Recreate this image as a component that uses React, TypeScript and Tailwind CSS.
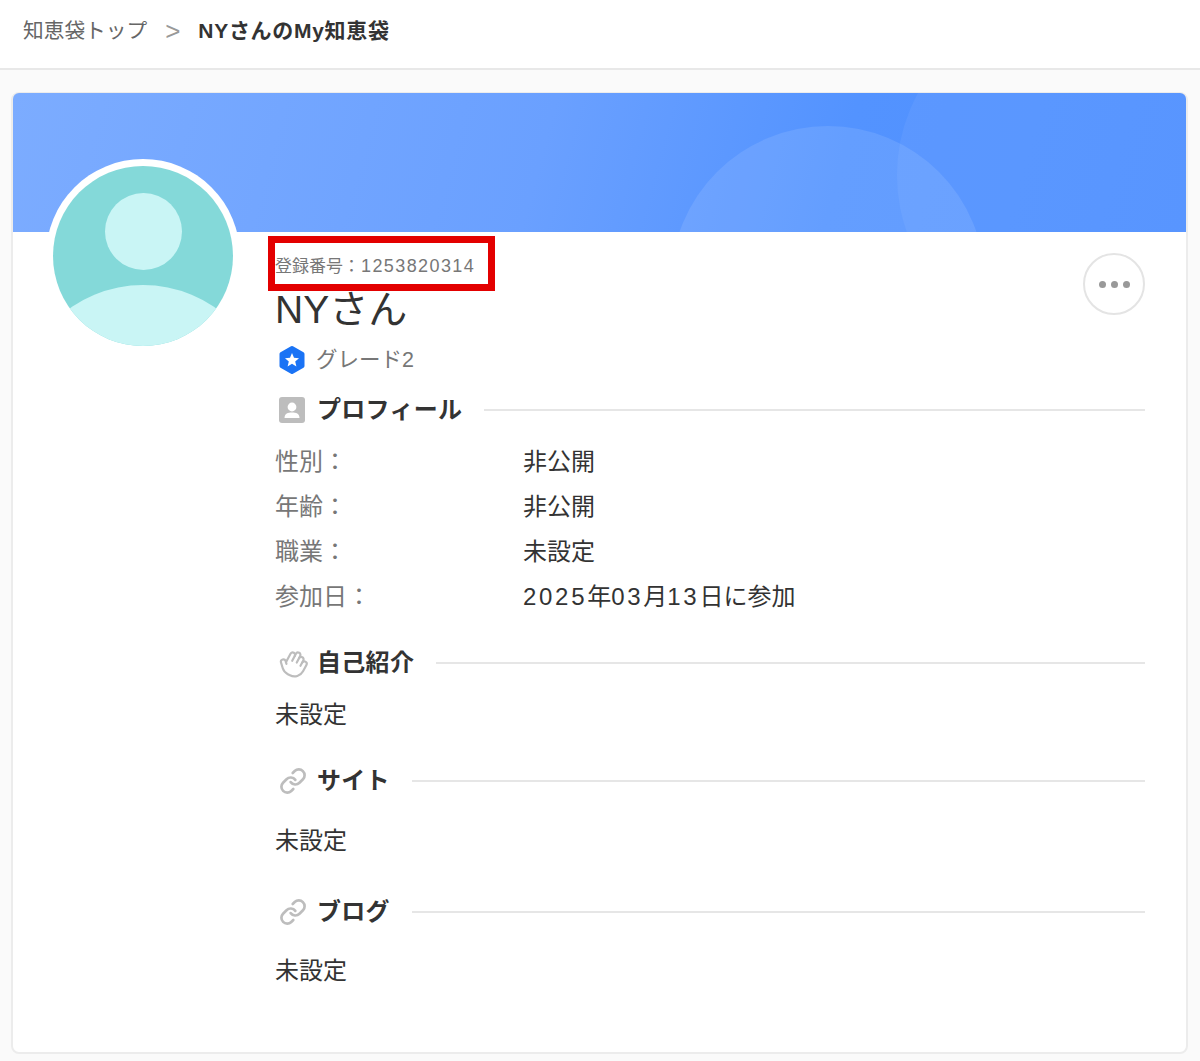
import React from "react";
import { Link, Hand } from "lucide-react";

const font = { fontFamily: '"Liberation Sans","Noto Sans CJK JP",sans-serif' };

function SectionHead({ icon, title, cls }: { icon: React.ReactNode; title: string; cls: string }) {
  return (
    <div className={`flex items-center ${cls}`}>
      <div className="flex w-[34px] h-[30px] pl-[4px] items-center">{icon}</div>
      <span className="ml-[8px] text-[24px] leading-[30px] font-bold text-[#333] tracking-[0.3px]">{title}</span>
      <div className="flex-1 h-[1.5px] bg-[#e6e6e6] ml-[22px]" />
    </div>
  );
}

function Row({ label, value }: { label: string; value: React.ReactNode }) {
  return (
    <div className="flex h-[45px] items-center text-[24px]">
      <span className="w-[248px] text-[#777]">{label}</span>
      <span className="text-[#333]">{value}</span>
    </div>
  );
}

const link = <Link size={28} color="#bdbdbd" strokeWidth={2.3} />;
const N = ({ children }: { children: React.ReactNode }) => <span className="tracking-[2.7px]">{children}</span>;

export default function App() {
  return (
    <div style={font} className="w-[1200px] h-[1061px] bg-[#fafafa] overflow-hidden relative">
      <header className="h-[70px] bg-white border-b-2 border-[#e8e8e8] flex items-center pl-[23px] pb-[6px]">
        <span className="text-[#666] text-[20.7px]">知恵袋トップ</span>
        <span className="text-[#999] text-[26px] mx-[18px] leading-none">&gt;</span>
        <span className="text-[#333] font-bold text-[21px] tracking-[0.7px]">NYさんのMy知恵袋</span>
      </header>

      <main className="mx-[11px] mt-[22px] h-[962px] w-[1177px] bg-white border-2 border-[#ececec] rounded-[8px] relative">
        <div className="h-[139px] mt-[-1px] rounded-t-[6px] overflow-hidden relative bg-[linear-gradient(105deg,#7cacff_0%,#6aa0ff_45%,#5393ff_70%,#4f8fff_100%)]">
          <div className="absolute left-[658px] top-[33px] w-[314px] h-[314px] rounded-full bg-white/10" />
          <div className="absolute left-[884px] top-[-88px] w-[340px] h-[340px] rounded-full bg-white/5" />
        </div>

        <div className="flex pr-[41px]">
          <div className="w-[262px] shrink-0 pl-[33px]">
            <div className="w-[194px] h-[194px] mt-[-73px] relative rounded-full bg-white p-[7px]">
              <div className="w-full h-full rounded-full bg-[#84d9d9] overflow-hidden relative">
                <div className="absolute left-[52px] top-[27px] w-[77px] h-[77px] rounded-full bg-[#c9f5f5]" />
                <div className="absolute left-[-37px] top-[119px] w-[254px] h-[254px] rounded-full bg-[#c9f5f5]" />
              </div>
            </div>
          </div>

          <div className="flex-1 flex flex-col">
            <div className="h-[58px] flex items-end justify-between relative">
              <span className="text-[17px] leading-[24px] mb-[11px] text-[#777]">
                登録番号：<span className="text-[18px] tracking-[1.4px] ml-[1px]">1253820314</span>
              </span>
              <button className="absolute right-0 top-[21px] w-[62px] h-[62px] rounded-full border-2 border-[#e4e4e4] bg-white flex items-center justify-center gap-[5px]">
                <span className="w-[7px] h-[7px] rounded-full bg-[#999]" />
                <span className="w-[7px] h-[7px] rounded-full bg-[#999]" />
                <span className="w-[7px] h-[7px] rounded-full bg-[#999]" />
              </button>
            </div>
            <div className="text-[39px] leading-[46px] mt-[-3px] text-[#333]">NYさん</div>
            <div className="flex items-center h-[40px] mt-[7px]">
              <div className="w-[34px] pl-[2px]">
                <svg width="30" height="30" viewBox="0 0 30 30">
                  <path d="M15 3 L25.5 9 V21 L15 27 L4.500 21 V9 Z" fill="#1a73f5" stroke="#1a73f5" strokeWidth="4" strokeLinejoin="round" />
                  <path d="M15 8 L17 12.8 L22 13.2 L18.2 16.5 L19.4 21.5 L15 18.8 L10.6 21.5 L11.8 16.5 L8 13.2 L13 12.8 Z" fill="#fff" />
                </svg>
              </div>
              <span className="ml-[7px] text-[21.500px] text-[#777]">グレード2</span>
            </div>

            <SectionHead
              cls="mt-[15px]"
              title="プロフィール"
              icon={
                <svg width="26" height="26" viewBox="0 0 26 26">
                  <rect width="26" height="26" rx="3" fill="#bdbdbd" />
                  <circle cx="13" cy="10" r="4.4" fill="#fff" />
                  <path d="M5.5 21 C5.5 16.5 9 15.6 13 15.6 C17 15.6 20.5 16.5 20.5 21 Z" fill="#fff" />
                </svg>
              }
            />
            <div className="mt-[14px] flex flex-col">
              <Row label="性別：" value="非公開" />
              <Row label="年齢：" value="非公開" />
              <Row label="職業：" value="未設定" />
              <Row
                label="参加日："
                value={
                  <>
                    <N>2025</N>年<N>03</N>月<N>13</N>日に参加
                  </>
                }
              />
            </div>

            <SectionHead
              cls="mt-[29px]"
              title="自己紹介"
              icon={<Hand size={29} color="#bdbdbd" strokeWidth={1.8} className="rotate-[28deg]" />}
            />
            <div className="mt-[22px] text-[24px] leading-[30px] text-[#333]">未設定</div>
            <SectionHead cls="mt-[36px]" title="サイト" icon={link} />
            <div className="mt-[30px] text-[24px] leading-[30px] text-[#333]">未設定</div>
            <SectionHead cls="mt-[41px]" title="ブログ" icon={link} />
            <div className="mt-[29px] text-[24px] leading-[30px] text-[#333]">未設定</div>
          </div>
        </div>
      </main>

      <div className="absolute left-[268px] top-[236px] w-[227px] h-[55px] border-[7px] border-[#e30000]" />
    </div>
  );
}
